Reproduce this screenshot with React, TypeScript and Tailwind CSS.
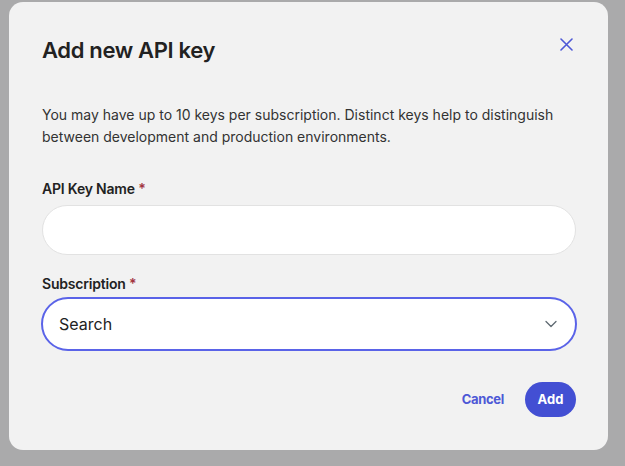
import React from "react";

export default function App() {
  return (
    <div
      className="w-[625px] h-[466px] bg-[#aaaaab] pl-[9px] pt-[2px] overflow-hidden"
      style={{ fontFamily: "Inter, 'Noto Sans', sans-serif" }}
    >
      <div className="w-[599px] h-[448px] bg-[#f2f2f2] rounded-[14px] pl-[33px] pr-[32px] pt-[34px] flex flex-col">
        <div className="flex items-start justify-between">
          <h1 className="text-[22px] leading-[28px] font-semibold text-[#222] tracking-[-0.35px]">Add new API key</h1>
          <button className="mt-0 mr-[2px] w-[16px] h-[16px] flex items-center justify-center text-[#4d58d6]">
            <svg width="13" height="13" viewBox="0 0 13 13" fill="none" stroke="currentColor" strokeWidth="1.6" strokeLinecap="round">
              <path d="M1 1L12 12M12 1L1 12" />
            </svg>
          </button>
        </div>
        <p className="mt-[40px] text-[14px] leading-[22px] text-[#333]">
          You may have up to 10 keys per subscription. Distinct keys help to distinguish between development and production environments.
        </p>
        <label className="mt-[31px] text-[14px] leading-[20px] font-semibold text-[#222] tracking-[-0.2px]">
          API Key Name <span className="text-[#a23440]">*</span>
        </label>
        <div className="mt-[6px] h-[50px] rounded-full bg-white border border-[#e2e2e2]" />
        <label className="mt-[19px] text-[14px] leading-[20px] font-semibold text-[#222] tracking-[-0.2px]">
          Subscription <span className="text-[#a23440]">*</span>
        </label>
        <div className="mt-[3px] -mx-px h-[54px] rounded-full bg-white border-2 border-[#5a63e8] flex items-center justify-between pl-[16px] pr-[18px]">
          <span className="text-[16px] text-[#222]">Search</span>
          <svg width="12" height="8" viewBox="0 0 12 8" fill="none" stroke="#5f6a72" strokeWidth="1.3" strokeLinecap="round" strokeLinejoin="round">
            <path d="M1 1.5L6 6.5L11 1.5" />
          </svg>
        </div>
        <div className="mt-[31px] flex justify-end items-center gap-[21px]">
          <button className="text-[13px] font-bold text-[#4d58d6] tracking-[-0.3px]">Cancel</button>
          <button className="h-[35px] w-[51px] rounded-full bg-[#434fd3] text-white text-[13px] font-bold">Add</button>
        </div>
      </div>
    </div>
  );
}
